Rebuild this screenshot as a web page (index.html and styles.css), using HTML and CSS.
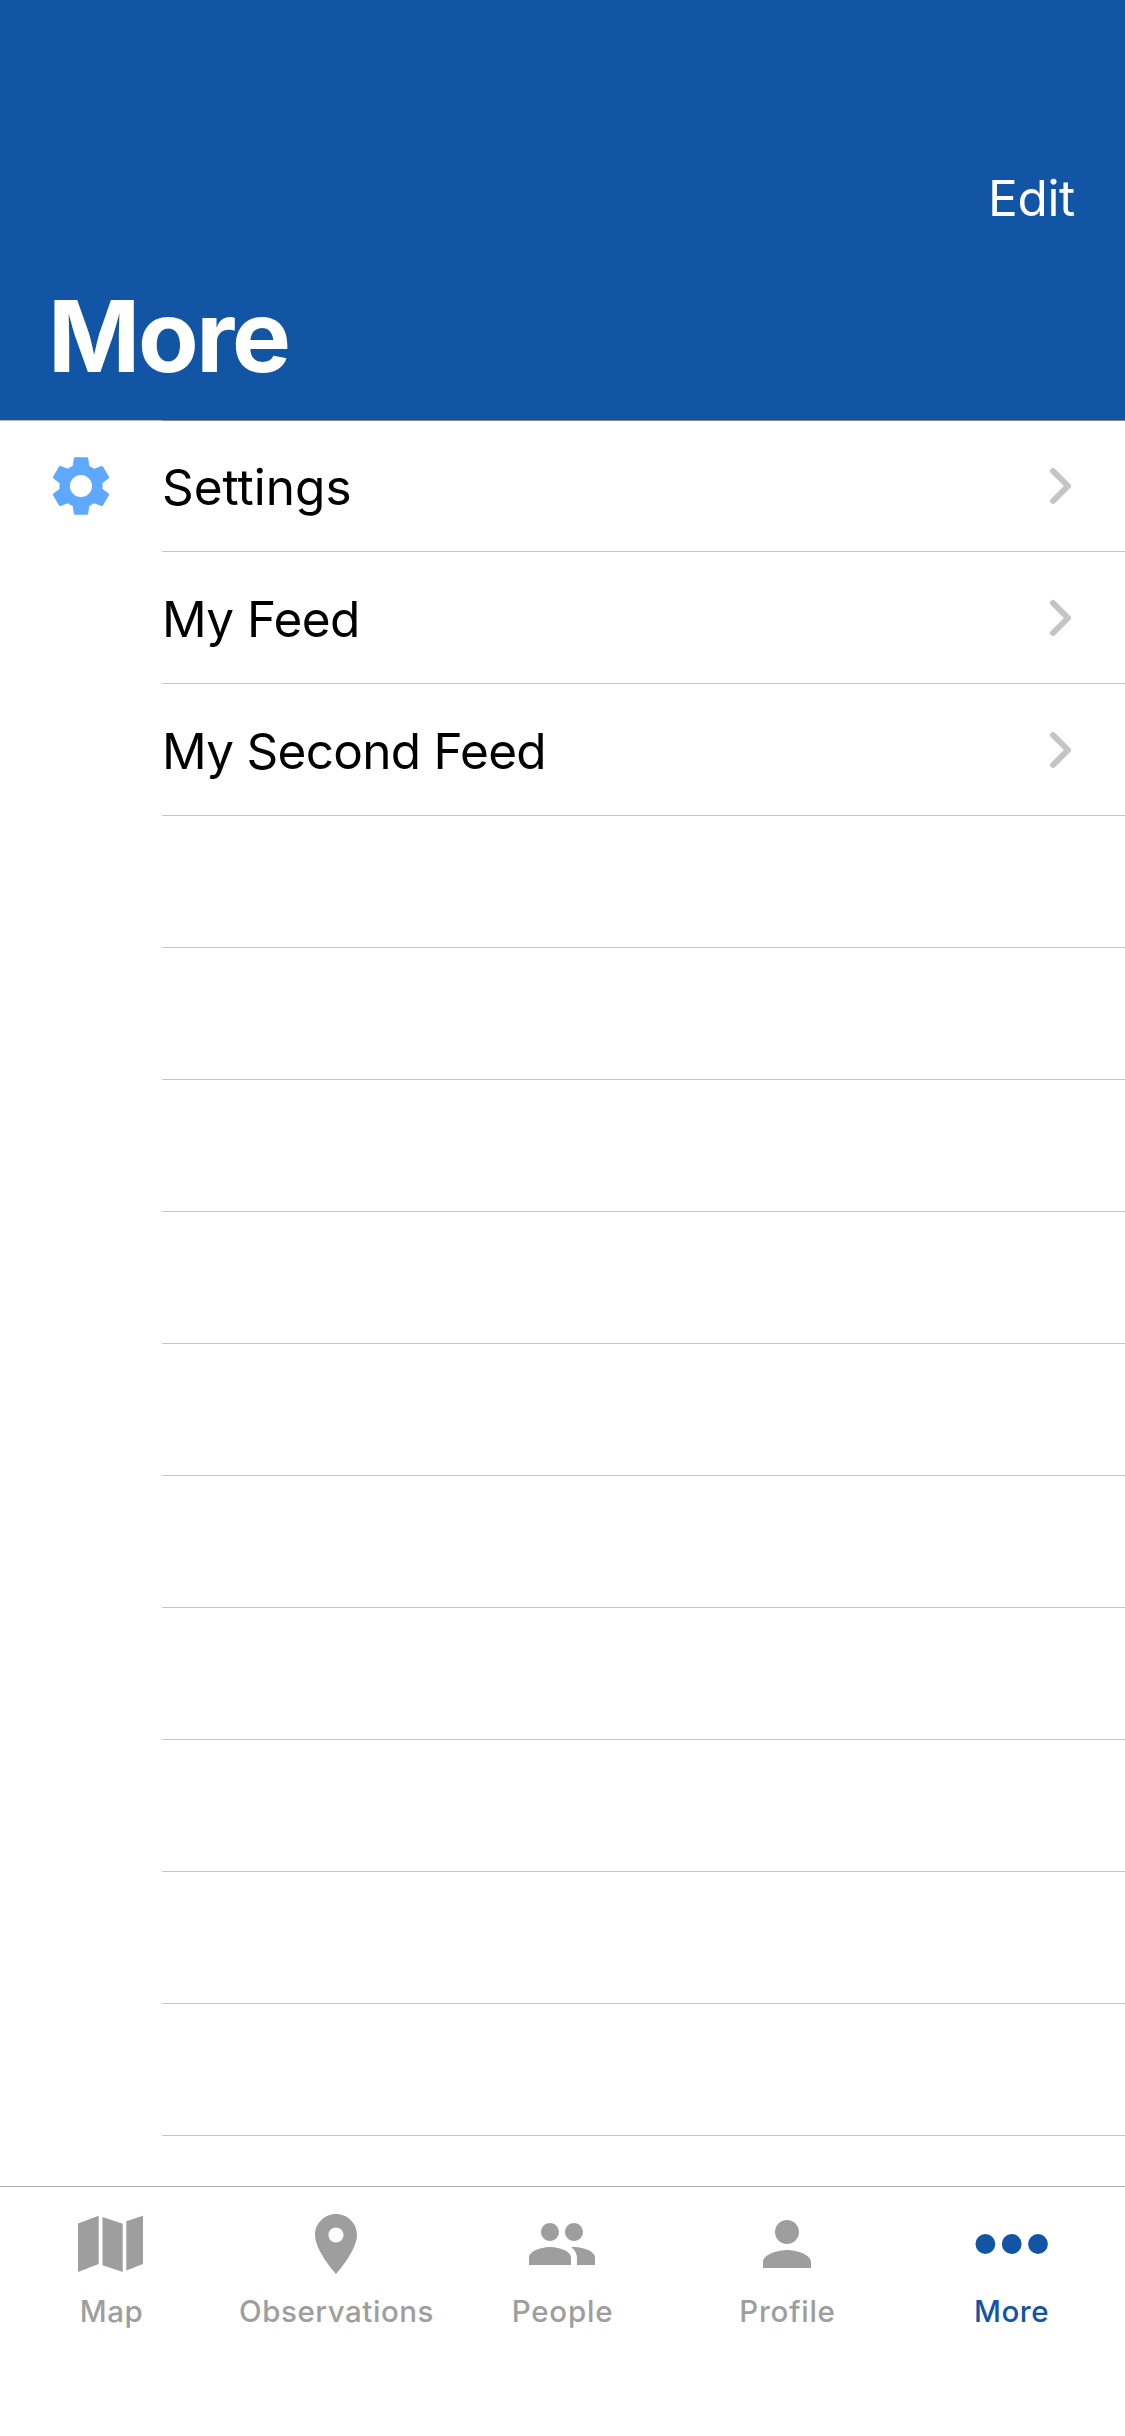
FILE: index.html
```html
<!DOCTYPE html>
<html lang="en">
<head>
<meta charset="utf-8">
<title>More</title>
<link rel="stylesheet" href="styles.css">
</head>
<body>
<div class="screen">
  <header class="navbar">
    <div class="navbar-actions"><span class="edit">Edit</span></div>
    <h1 class="title">More</h1>
  </header>
  <main class="list">
    <div class="row first">
      <div class="row-icon">
        <svg width="72" height="72" viewBox="0 0 24 24" fill="#5ea9ff"><path d="M19.14 12.94c.04-.3.06-.61.06-.94 0-.32-.02-.64-.07-.94l2.03-1.58c.18-.14.23-.41.12-.61l-1.92-3.32c-.12-.22-.37-.29-.59-.22l-2.39.96c-.5-.38-1.03-.7-1.62-.94l-.36-2.54c-.04-.24-.24-.41-.48-.41h-3.84c-.24 0-.43.17-.47.41l-.36 2.54c-.59.24-1.13.57-1.62.94l-2.39-.96c-.22-.08-.47 0-.59.22L2.74 8.87c-.12.21-.08.47.12.61l2.03 1.58c-.05.3-.09.63-.09.94s.02.64.07.94l-2.03 1.58c-.18.14-.23.41-.12.61l1.92 3.32c.12.22.37.29.59.22l2.39-.96c.5.38 1.03.7 1.62.94l.36 2.54c.05.24.24.41.48.41h3.84c.24 0 .44-.17.47-.41l.36-2.54c.59-.24 1.13-.56 1.62-.94l2.39.96c.22.08.47 0 .59-.22l1.92-3.32c.12-.22.07-.47-.12-.61l-2.01-1.58zM12 15.7c-2.04 0-3.7-1.66-3.7-3.7s1.66-3.7 3.7-3.7 3.7 1.66 3.7 3.7-1.66 3.7-3.7 3.7z"/></svg>
      </div>
      <div class="row-body"><span class="label settings">Settings</span>
        <svg class="chevron" width="24" height="40" viewBox="0 0 24 40"><path d="M5 5L20 20L5 35"/></svg></div>
    </div>
    <div class="row">
      <div class="row-icon"></div>
      <div class="row-body"><span class="label feed">My Feed</span>
        <svg class="chevron" width="24" height="40" viewBox="0 0 24 40"><path d="M5 5L20 20L5 35"/></svg></div>
    </div>
    <div class="row">
      <div class="row-icon"></div>
      <div class="row-body"><span class="label second-feed">My Second Feed</span>
        <svg class="chevron" width="24" height="40" viewBox="0 0 24 40"><path d="M5 5L20 20L5 35"/></svg></div>
    </div>
    <div class="row"><div class="row-icon"></div><div class="row-body"></div></div>
    <div class="row"><div class="row-icon"></div><div class="row-body"></div></div>
    <div class="row"><div class="row-icon"></div><div class="row-body"></div></div>
    <div class="row"><div class="row-icon"></div><div class="row-body"></div></div>
    <div class="row"><div class="row-icon"></div><div class="row-body"></div></div>
    <div class="row"><div class="row-icon"></div><div class="row-body"></div></div>
    <div class="row"><div class="row-icon"></div><div class="row-body"></div></div>
    <div class="row"><div class="row-icon"></div><div class="row-body"></div></div>
    <div class="row"><div class="row-icon"></div><div class="row-body"></div></div>
    <div class="row"><div class="row-icon"></div><div class="row-body"></div></div>
  </main>
  <nav class="tabbar">
    <div class="tab">
      <svg width="72" height="72" viewBox="0 0 72 72"><path d="M3 15.6L23.7 7.8V56L3 64zM27.5 9L47.7 15.8V64L27.5 57.2zM51.3 13.3L68 7.8V56L51.3 62.5z"/></svg>
      <span>Map</span>
    </div>
    <div class="tab">
      <svg width="72" height="72" viewBox="0 0 24 24"><path d="M12 2C8.13 2 5 5.13 5 9c0 5.25 7 13 7 13s7-7.75 7-13c0-3.87-3.13-7-7-7zm0 9.5c-1.38 0-2.5-1.12-2.5-2.5s1.12-2.5 2.5-2.5 2.5 1.12 2.5 2.5-1.12 2.5-2.5 2.5z"/></svg>
      <span>Observations</span>
    </div>
    <div class="tab wide">
      <svg width="72" height="72" viewBox="0 0 24 24"><path d="M16 11c1.66 0 2.99-1.34 2.99-3S17.66 5 16 5s-3 1.34-3 3 1.34 3 3 3zm-8 0c1.66 0 2.99-1.34 2.99-3S9.66 5 8 5 5 6.34 5 8s1.34 3 3 3zm0 2c-2.33 0-7 1.17-7 3.5V19h14v-2.5c0-2.33-4.67-3.5-7-3.5zm8 0c-.29 0-.62.02-.97.05 1.16.84 1.97 1.97 1.97 3.45V19h6v-2.5c0-2.33-4.67-3.5-7-3.5z"/></svg>
      <span>People</span>
    </div>
    <div class="tab wide">
      <svg width="72" height="72" viewBox="0 0 24 24"><path d="M12 12c2.21 0 4-1.79 4-4s-1.79-4-4-4-4 1.79-4 4 1.79 4 4 4zm0 2c-2.67 0-8 1.34-8 4v2h16v-2c0-2.66-5.33-4-8-4z"/></svg>
      <span>Profile</span>
    </div>
    <div class="tab active">
      <svg width="74" height="72" viewBox="0 0 74 72"><circle cx="10.4" cy="36" r="9.9"/><circle cx="36.7" cy="36" r="9.9"/><circle cx="63" cy="36" r="9.9"/></svg>
      <span>More</span>
    </div>
  </nav>
</div>
</body>
</html>
```
FILE: styles.css
```css
* {
  box-sizing: border-box;
}

body {
  margin: 0;
  background: #fff;
  font-family: Inter, "Liberation Sans", sans-serif;
}

svg {
  display: block;
}

.screen {
  display: flex;
  flex-direction: column;
  width: 1125px;
  height: 2436px;
  overflow: hidden;
}

.navbar {
  display: flex;
  flex-direction: column;
  gap: 48px;
  flex: none;
  height: 420px;
  padding: 168px 50px 0 48px;
  background: #1155a4;
  color: #fff;
}

.navbar-actions {
  display: flex;
  justify-content: flex-end;
}

.edit {
  font-size: 49.5px;
  line-height: 60px;
  letter-spacing: -0.3px;
}

.title {
  margin: 0;
  font-size: 99px;
  line-height: 120px;
  font-weight: 700;
  letter-spacing: -2.3px;
}

.list {
  flex: 1;
  min-height: 0;
  overflow: hidden;
}

.row {
  display: flex;
  height: 132px;
}

.row-icon {
  display: flex;
  align-items: center;
  justify-content: center;
  width: 162px;
}

.row-body {
  display: flex;
  flex: 1;
  align-items: center;
  justify-content: space-between;
  padding: 1px 53px 0 0;
  border-bottom: 1px solid #c6c6c8;
}

.first .row-icon {
  padding-bottom: 1px;
  border-top: 1px solid #b2b2b2;
}

.first .row-body {
  padding-top: 0;
  border-top: 1px solid #88888b;
}

.label {
  padding-top: 2px;
  color: #000;
  font-size: 49.5px;
  line-height: 60px;
}

.settings {
  letter-spacing: 0;
}

.feed {
  letter-spacing: -0.6px;
}

.second-feed {
  letter-spacing: -0.72px;
}

.chevron {
  fill: none;
  stroke: #c4c4c6;
  stroke-width: 6;
  stroke-linecap: round;
  stroke-linejoin: round;
}

.tabbar {
  display: flex;
  flex: none;
  height: 250px;
  padding: 21px 2px 0 0;
  border-top: 1px solid #b2b2b2;
}

.tab {
  display: flex;
  flex: none;
  width: 225px;
  margin-left: -1px;
  margin-right: 1px;
  flex-direction: column;
  align-items: center;
  gap: 13px;
  color: #9e9e9e;
  font-size: 29.5px;
  line-height: 36px;
  font-weight: 500;
  letter-spacing: 0.55px;
}

.tab svg {
  margin-right: 1px;
  fill: currentColor;
}

.tab.wide {
  margin-left: 0;
  margin-right: 0;
  letter-spacing: 0.77px;
}

.tab.active {
  margin-left: -1px;
  margin-right: 0;
  color: #1155a4;
}

.tab.active svg {
  margin-right: 0;
}
```
